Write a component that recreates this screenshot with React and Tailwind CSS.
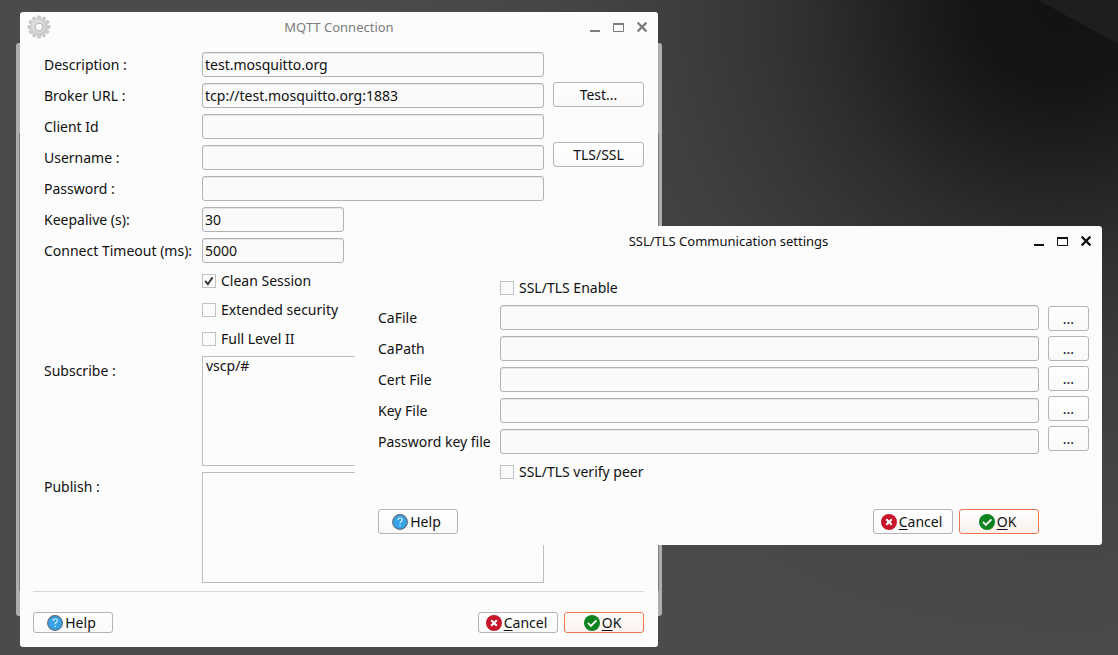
import React from "react";

function GearIcon() {
  const teeth = Array.from({ length: 12 }, (_, i) => i * 30);
  return (
    <svg width="24" height="24" viewBox="0 0 24 24" aria-hidden="true">
      <defs>
        <linearGradient id="gear-fill" x1="0" y1="0" x2="1" y2="1">
          <stop offset="0" stopColor="#e6e6e6" />
          <stop offset="1" stopColor="#c4c4c4" />
        </linearGradient>
      </defs>
      {teeth.map((a) => (
        <path
          key={a}
          d="M10.3 5 L10.7 1 H13.3 L13.7 5 Z"
          fill="#cfcfcf"
          stroke="#b4b4b4"
          strokeWidth="0.6"
          transform={`rotate(${a} 12 12)`}
        />
      ))}
      <circle cx="12" cy="12" r="8" fill="url(#gear-fill)" stroke="#c6c6c6" strokeWidth="0.5" />
      <circle cx="12" cy="12" r="5.6" fill="none" stroke="#dedede" strokeWidth="1" />
      <circle cx="12" cy="12" r="3.8" fill="#fcfcfc" stroke="#aeaeae" strokeWidth="0.9" />
    </svg>
  );
}

function HelpIcon() {
  return (
    <svg width="16" height="16" viewBox="0 0 16 16" aria-hidden="true">
      <circle cx="8" cy="8" r="7.4" fill="#35a3e6" stroke="#5d6c78" strokeWidth="1.1" />
      <path
        d="M5.9 6.1c0-1.3 1-2.1 2.2-2.1s2.1.8 2.1 1.9c0 1.6-2.1 1.7-2.1 3.4"
        fill="none"
        stroke="#d9efff"
        strokeWidth="1.1"
      />
      <circle cx="8.1" cy="11.5" r="0.75" fill="#d9efff" />
    </svg>
  );
}

function CancelIcon() {
  return (
    <svg width="16" height="16" viewBox="0 0 16 16" aria-hidden="true">
      <circle cx="8" cy="8" r="8" fill="#c7162b" />
      <path d="M5.2 5.2l5.6 5.6M10.8 5.2l-5.6 5.6" stroke="#fff" strokeWidth="2" />
    </svg>
  );
}

function OkIcon() {
  return (
    <svg width="16" height="16" viewBox="0 0 16 16" aria-hidden="true">
      <circle cx="8" cy="8" r="8" fill="#0e8420" />
      <path d="M3.9 7.9l3 3 5.6-5.6" fill="none" stroke="#fff" strokeWidth="1.8" />
    </svg>
  );
}

function WindowControls() {
  return (
    <div className="absolute right-[9px] top-2 flex gap-3">
      <button type="button" aria-label="Minimize" className="h-4 w-3">
        <svg width="12" height="16" viewBox="0 0 12 16" aria-hidden="true">
          <path d="M1 11h10" stroke="currentColor" strokeWidth="2" />
        </svg>
      </button>
      <button type="button" aria-label="Maximize" className="h-4 w-3">
        <svg width="12" height="16" viewBox="0 0 12 16" aria-hidden="true">
          <path d="M0.5 3v8.5h10V3" fill="none" stroke="currentColor" />
          <path d="M0 4h11" stroke="currentColor" strokeWidth="2" />
        </svg>
      </button>
      <button type="button" aria-label="Close" className="h-4 w-3">
        <svg width="12" height="16" viewBox="0 0 12 16" aria-hidden="true">
          <path d="M0.6 2.6l8.8 8.8M9.4 2.6l-8.8 8.8" stroke="currentColor" strokeWidth="2.2" />
        </svg>
      </button>
    </div>
  );
}

function TitleBar({ title, icon, active }) {
  return (
    <header
      className={
        active
          ? "relative flex h-[30px] items-center justify-center text-[#111]"
          : "relative flex h-[30px] items-center justify-center text-[#7c7c7c]"
      }
    >
      {icon && <span className="absolute left-[7px] top-[3px]">{icon}</span>}
      <h1 className="text-[13px] leading-5">{title}</h1>
      <WindowControls />
    </header>
  );
}

function TextField({ id, className = "w-full", defaultValue, type = "text" }) {
  return (
    <input
      id={id}
      type={type}
      defaultValue={defaultValue}
      className={`h-[25px] rounded-[3px] border border-[#b2b2b2] bg-[#fafafa] px-[2px] shadow-[inset_0_1px_0_#e6e6e6] outline-none ${className}`}
    />
  );
}

function CheckField({ id, label, defaultChecked }) {
  return (
    <div className="col-start-2 flex h-[23px] items-center gap-[5px]">
      <span className="relative flex h-[14px] w-[14px]">
        <input
          id={id}
          type="checkbox"
          defaultChecked={defaultChecked}
          className="peer h-[14px] w-[14px] appearance-none border border-[#c2c2c2] bg-[#fafafa]"
        />
        <svg
          className="pointer-events-none absolute inset-0 hidden peer-checked:block"
          width="14"
          height="14"
          viewBox="0 0 14 14"
          aria-hidden="true"
        >
          <path d="M3.2 6.8l2.7 3.4 4.6-6.8" fill="none" stroke="#333" strokeWidth="1.9" />
        </svg>
      </span>
      <label htmlFor={id}>{label}</label>
    </div>
  );
}

function PlainButton({ children, label }) {
  return (
    <button
      type="button"
      aria-label={label}
      className="flex h-[25px] w-full items-center justify-center rounded-[3px] border border-[#b4b4b4] bg-linear-to-b from-white to-[#f9f9f9]"
    >
      {children}
    </button>
  );
}

function ActionButton({ icon, accel, children, primary, height }) {
  return (
    <button
      type="button"
      className={`flex w-20 items-center justify-center gap-[2px] rounded-[3px] border bg-linear-to-b pr-[3px] ${height} ${
        primary ? "border-[#f0764e] from-white to-[#f9f1ee]" : "border-[#b4b4b4] from-white to-[#f9f9f9]"
      }`}
    >
      {icon}
      <span>
        {accel && <span className="underline decoration-1 underline-offset-2">{accel}</span>}
        {children}
      </span>
    </button>
  );
}

function ActionRow({ height }) {
  return (
    <div className="flex gap-[6px]">
      <div className="flex-1">
        <ActionButton icon={<HelpIcon />} height={height}>
          Help
        </ActionButton>
      </div>
      <ActionButton icon={<CancelIcon />} accel="C" height={height}>
        ancel
      </ActionButton>
      <ActionButton icon={<OkIcon />} accel="O" primary height={height}>
        K
      </ActionButton>
    </div>
  );
}

function ConnectionWindow() {
  return (
    <section className="absolute left-5 top-3 w-[638px] rounded-[3px] bg-[#fcfcfc] pb-[14px]">
      <TitleBar title="MQTT Connection" icon={<GearIcon />} />
      <div className="flex gap-[9px] pl-6 pr-[14px] pt-[10px]">
        <div className="grid flex-1 grid-cols-[152px_1fr] items-center gap-[6px]">
          <label htmlFor="description">Description :</label>
          <TextField id="description" defaultValue="test.mosquitto.org" />
          <label htmlFor="broker">Broker URL :</label>
          <TextField id="broker" defaultValue="tcp://test.mosquitto.org:1883" />
          <label htmlFor="client">Client Id</label>
          <TextField id="client" />
          <label htmlFor="username">Username :</label>
          <TextField id="username" />
          <label htmlFor="password">Password :</label>
          <TextField id="password" type="password" />
          <label htmlFor="keepalive">Keepalive (s):</label>
          <TextField id="keepalive" defaultValue="30" className="w-[142px]" />
          <label htmlFor="timeout" className="whitespace-nowrap">
            Connect Timeout (ms):
          </label>
          <TextField id="timeout" defaultValue="5000" className="w-[142px]" />
          <CheckField id="clean" label="Clean Session" defaultChecked />
          <CheckField id="extended" label="Extended security" />
          <CheckField id="level2" label="Full Level II" />
          <label htmlFor="subscribe" className="self-start pt-[5px]">
            Subscribe :
          </label>
          <textarea
            id="subscribe"
            defaultValue="vscp/#"
            className="h-[110px] w-full resize-none border border-[#bdbdbd] bg-[#fcfcfc] px-[3px] leading-[18px] outline-none"
          />
          <label htmlFor="publish" className="self-start pt-[5px]">
            Publish :
          </label>
          <textarea
            id="publish"
            className="h-[111px] w-full resize-none border border-[#bdbdbd] bg-[#fcfcfc] px-[3px] leading-[18px] outline-none"
          />
        </div>
        <div className="flex w-[91px] flex-col gap-[35px] pt-[30px]">
          <PlainButton>Test...</PlainButton>
          <PlainButton>TLS/SSL</PlainButton>
        </div>
      </div>
      <div className="ml-[13px] mr-[14px] mt-2 border-t border-[#d9d9d9] pt-5">
        <ActionRow height="h-[21px]" />
      </div>
    </section>
  );
}

const files = [
  ["cafile", "CaFile"],
  ["capath", "CaPath"],
  ["certfile", "Cert File"],
  ["keyfile", "Key File"],
  ["pwkeyfile", "Password key file"],
];

function SslWindow() {
  return (
    <section className="absolute left-[355px] top-[226px] w-[747px] rounded-[3px] bg-[#fcfcfc] pb-[11px]">
      <TitleBar title="SSL/TLS Communication settings" active />
      <div className="flex gap-[9px] pl-[23px] pr-[13px] pt-5">
        <div className="flex-1">
          <div className="grid grid-cols-[116px_1fr] items-center gap-[6px]">
            <CheckField id="ssl-enable" label="SSL/TLS Enable" />
            {files.map(([id, label]) => (
              <React.Fragment key={id}>
                <label htmlFor={id} className="whitespace-nowrap">
                  {label}
                </label>
                <TextField id={id} />
              </React.Fragment>
            ))}
            <CheckField id="ssl-verify" label="SSL/TLS verify peer" />
          </div>
          <div className="pt-[26px]">
            <ActionRow height="h-[25px]" />
          </div>
        </div>
        <div className="flex w-[41px] flex-col gap-[5px] pt-[30px]">
          {files.map(([id, label]) => (
            <PlainButton key={id} label={`Browse ${label}`}>
              ...
            </PlainButton>
          ))}
        </div>
      </div>
    </section>
  );
}

export default function App() {
  return (
    <main className="relative min-h-screen overflow-hidden bg-[radial-gradient(circle_at_1060px_0px,#121212_0px,#151515_90px,#1e1e1e_150px,#2d2d2d_240px,#363636_310px,#3f3f3f_400px,#464646_520px,#4b4b4b_700px)] font-['Noto_Sans','Open_Sans',sans-serif] text-[14px] leading-5 text-[#111]">
      <div className="absolute right-0 top-0 h-11 w-20 bg-[#1e1e1e] [clip-path:polygon(0_0,100%_0,100%_100%)]" />
      <div className="absolute left-4 top-[43px] h-[573px] w-[646px] rounded-[3px] bg-[#adadad] px-[3px] pt-[90px]">
        <div className="h-[458px] border-x border-[#7d7d7d]" />
      </div>
      <ConnectionWindow />
      <SslWindow />
    </main>
  );
}
